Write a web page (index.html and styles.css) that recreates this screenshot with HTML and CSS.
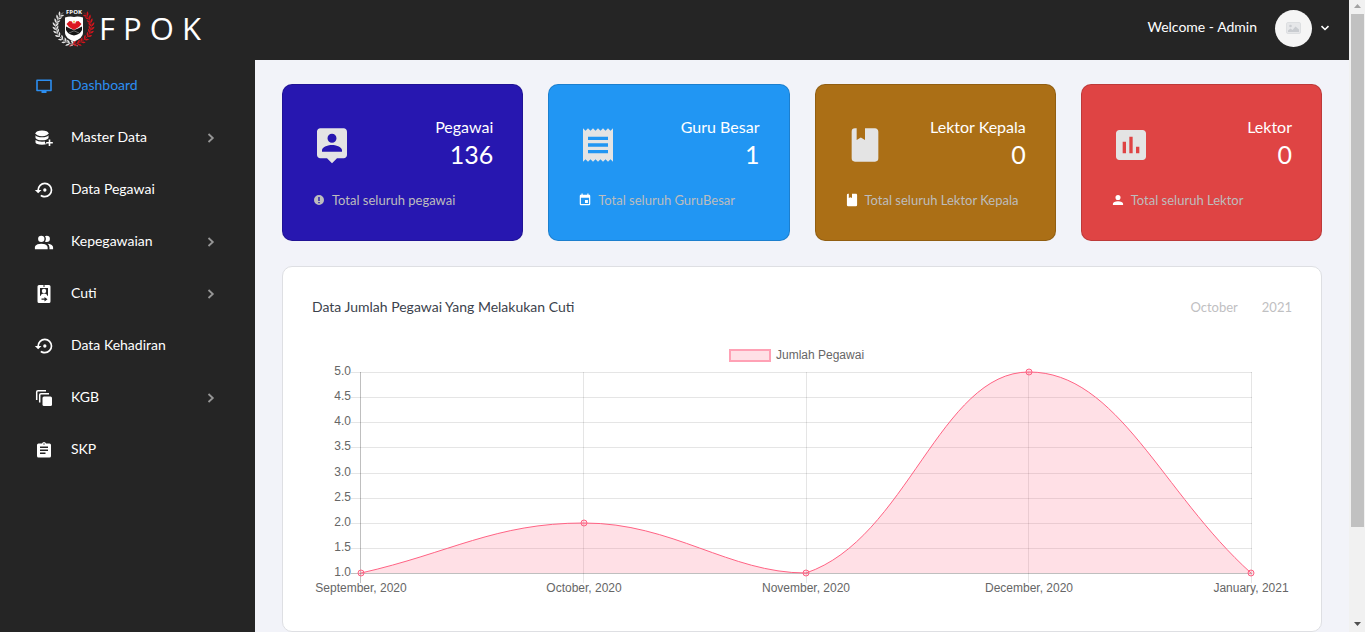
FILE: index.html
```html
<!DOCTYPE html>
<html lang="id">
<head>
<meta charset="utf-8">
<title>FPOK - Dashboard</title>
<meta name="viewport" content="width=device-width, initial-scale=1">
<link rel="stylesheet" href="styles.css">
</head>
<body>
<div class="window">
  <div class="app">
    <header class="topbar">
      <a class="brand" href="#">
        <svg class="brand-mark" viewBox="0 0 44 38" aria-hidden="true">
          <defs>
            <marker id="leafWhite" viewBox="-4 -4 8 8" markerWidth="8" markerHeight="8" markerUnits="userSpaceOnUse" orient="auto">
              <path d="M-1 0Q0 -3 3 -3Q2.500 -0.500 -1 0ZM-1 0Q0 3 3 3Q2.500 0.500 -1 0Z" fill="#e4e4e4"/>
            </marker>
            <marker id="leafRed" viewBox="-4 -4 8 8" markerWidth="8" markerHeight="8" markerUnits="userSpaceOnUse" orient="auto">
              <path d="M-1 0Q0 -3 3 -3Q2.500 -0.500 -1 0ZM-1 0Q0 3 3 3Q2.500 0.500 -1 0Z" fill="#d5141b"/>
            </marker>
          </defs>
          <path d="M26 37L21 35L17 34.500L13.500 32.500L10 30L7 27L5 23.500L4 20L3.500 16.500L4.500 13L6 9.500L8 6.500L11 3.500" fill="none" stroke="#e4e4e4" stroke-width=".6" marker-mid="url(#leafWhite)"/>
          <path d="M17 37L22 35L26 34.500L29.500 32.500L33 30L36 27L38 23.500L39 20L39.500 16.500L38.500 13L37 9.500L35 6.500L32 3.500" fill="none" stroke="#d5141b" stroke-width=".6" marker-mid="url(#leafRed)"/>
          <text x="22" y="5" class="brand-tiny">FPOK</text>
          <path d="M13 8.500Q18 7 22 8Q26 7 31 8.500V24Q31 29 22 32.500Q13 29 13 24Z" fill="#fff"/>
          <path d="M14.500 15L17.500 12L20 12.500L21 15L22 13.500L23 15L24 12.500L26.500 12L29.500 15L27 18L22 21L17 18Z" fill="#dc1820"/>
          <path d="M21 12.500L22 11.500L23 12.500L22 14Z" fill="#e3b52b"/>
          <path d="M14 17.500L18 19.500L22 21L26 19.500L30 17.500V21Q28 25.500 22 26.500Q16 25.500 14 21Z" fill="#161616"/>
          <path d="M17 24L22 21.800L27 24" fill="none" stroke="#aaa" stroke-width=".6"/>
        </svg>
        <span class="brand-name">F P O K</span>
      </a>
      <button class="account" type="button">
        <span class="label">Welcome - Admin</span>
        <span class="avatar">
          <svg viewBox="0 0 16 12" aria-hidden="true">
            <rect x=".5" y=".5" width="14" height="11" rx="1.500" fill="#e6e7e9" stroke="#dddfe1"/>
            <circle cx="4.500" cy="4" r="1.300" fill="#c9ccd0"/>
            <path d="M2 10V8.500L4.500 6.500L6.500 8L9.500 4.500L13 7.500V10Z" fill="#c9ccd0"/>
          </svg>
        </span>
        <svg class="caret" viewBox="0 0 10 6" aria-hidden="true"><path d="M1.500 1.200L5 4.500L8.500 1.200"/></svg>
      </button>
    </header>

    <nav class="sidebar" aria-label="Menu">
      <a class="nav-item active" href="#">
        <svg class="nav-icon" viewBox="0 0 20 20" aria-hidden="true"><path d="M3 4.300H17V14.500H3Z" fill="none" stroke="currentColor" stroke-width="1.600" stroke-linejoin="round"/><path d="M7.500 15H12.500V17H7.500Z"/></svg>
        <span class="label">Dashboard</span>
      </a>
      <button class="nav-item" type="button">
        <svg class="nav-icon" viewBox="0 0 20 20" aria-hidden="true"><ellipse cx="8" cy="5.300" rx="6.500" ry="2.900"/><path d="M1.500 7.300Q3 9.300 8 9.300T14.500 7.300V10Q13 12.300 8 12.300T1.500 10ZM1.500 12Q4 13.800 8 13.800L11 13.500V15.500H13V16Q11 16.800 8 16.800Q2 16.600 1.500 14.500Z"/><path d="M14.700 11.500H16.300V14H18.800V15.600H16.300V18H14.700V15.600H12.200V14H14.700Z"/></svg>
        <span class="label">Master Data</span>
        <svg class="nav-arrow" viewBox="0 0 8 10" aria-hidden="true"><path d="M1.500 1L5.800 5L1.500 9"/></svg>
      </button>
      <a class="nav-item" href="#">
        <svg class="nav-icon" viewBox="-1 0 24 24" aria-hidden="true"><path d="M12,3A9,9 0 0,0 3,12H0L4,16L8,12H5A7,7 0 1,1 12,19C10.500,19 9.090,18.500 7.940,17.700L6.500,19.140C8.040,20.300 9.940,21 12,21A9,9 0 0,0 12,3M14,12A2,2 0 1,0 12,14A2,2 0 0,0 14,12Z"/></svg>
        <span class="label">Data Pegawai</span>
      </a>
      <button class="nav-item" type="button">
        <svg class="nav-icon" viewBox="1 0 22 22" aria-hidden="true"><path d="M16 17V19H2V17S2 13 9 13 16 17 16 17M12.500 7.500A3.500 3.500 0 1 0 9 11A3.500 3.500 0 0 0 12.500 7.500M15.940 13A5.320 5.320 0 0 1 18 17V19H22V17S22 13.370 15.940 13M15 4A3.390 3.390 0 0 0 13.070 4.590A5 5 0 0 1 13.070 10.410A3.390 3.390 0 0 0 15 11A3.500 3.500 0 0 0 15 4Z"/></svg>
        <span class="label">Kepegawaian</span>
        <svg class="nav-arrow" viewBox="0 0 8 10" aria-hidden="true"><path d="M1.500 1L5.800 5L1.500 9"/></svg>
      </button>
      <button class="nav-item" type="button">
        <svg class="nav-icon" viewBox="0 0 20 20" aria-hidden="true"><path fill-rule="evenodd" d="M5 1H15Q16.500 1 16.500 2.500V17.500Q16.500 19 15 19H5Q3.500 19 3.500 17.500V2.500Q3.500 1 5 1ZM6 4V12H14V4ZM9 1.500V2.500H11V1.500Z"/><circle cx="10" cy="7" r="2.200"/><path d="M6.500 12Q7 9.500 10 9.500T13.500 12Z"/><path d="M7.500 14.600H10.500V13L13.500 15.200L10.500 17.400V15.800H7.500Z" fill="#252525"/></svg>
        <span class="label">Cuti</span>
        <svg class="nav-arrow" viewBox="0 0 8 10" aria-hidden="true"><path d="M1.500 1L5.800 5L1.500 9"/></svg>
      </button>
      <a class="nav-item" href="#">
        <svg class="nav-icon" viewBox="-1 0 24 24" aria-hidden="true"><path d="M12,3A9,9 0 0,0 3,12H0L4,16L8,12H5A7,7 0 1,1 12,19C10.500,19 9.090,18.500 7.940,17.700L6.500,19.140C8.040,20.300 9.940,21 12,21A9,9 0 0,0 12,3M14,12A2,2 0 1,0 12,14A2,2 0 0,0 14,12Z"/></svg>
        <span class="label">Data Kehadiran</span>
      </a>
      <button class="nav-item" type="button">
        <svg class="nav-icon" viewBox="0 0 20 20" aria-hidden="true"><path d="M2.700 12V4Q2.700 2.700 4 2.700H12M5.700 14.500V7Q5.700 5.700 7 5.700H15" fill="none" stroke="currentColor" stroke-width="1.500"/><rect x="8.500" y="8.500" width="9.500" height="9.500" rx="1.500"/></svg>
        <span class="label">KGB</span>
        <svg class="nav-arrow" viewBox="0 0 8 10" aria-hidden="true"><path d="M1.500 1L5.800 5L1.500 9"/></svg>
      </button>
      <a class="nav-item" href="#">
        <svg class="nav-icon" viewBox="0 0 20 20" aria-hidden="true"><path fill-rule="evenodd" d="M4.500 3.500H8Q8.500 2 10 2T12 3.500H15.500Q17 3.500 17 5V16Q17 17.500 15.500 17.500H4.500Q3 17.500 3 16V5Q3 3.500 4.500 3.500ZM9.300 3.500V4.500H10.700V3.500ZM6 6.500V8H14V6.500ZM6 9.500V11H14V9.500ZM6 12.500V14H11.500V12.500Z"/></svg>
        <span class="label">SKP</span>
      </a>
    </nav>

    <main class="content">
      <section class="stats" aria-label="Ringkasan">
        <article class="stat stat-indigo">
          <div class="stat-main">
            <svg class="stat-icon" viewBox="0 0 24 24" aria-hidden="true"><path d="M19 2H5c-1.110 0-2 .9-2 2v14c0 1.100.89 2 2 2h4l3 3 3-3h4c1.100 0 2-.9 2-2V4c0-1.100-.9-2-2-2zm-7 3.300c1.490 0 2.700 1.210 2.700 2.700 0 1.490-1.210 2.700-2.700 2.700S9.300 9.490 9.300 8c0-1.490 1.210-2.700 2.700-2.700zM18 16H6v-.9c0-2 4-3.100 6-3.100s6 1.100 6 3.100v.9z"/></svg>
            <div class="stat-figure"><h2>Pegawai</h2><strong>136</strong></div>
          </div>
          <p><svg class="note-icon muted" viewBox="0 0 14 14" aria-hidden="true"><path fill-rule="evenodd" d="M7 2A5 5 0 1 1 7 12A5 5 0 0 1 7 2ZM6.300 4V8H7.700V4ZM6.300 9V10.300H7.700V9Z"/></svg>Total seluruh pegawai</p>
        </article>
        <article class="stat stat-blue">
          <div class="stat-main">
            <svg class="stat-icon" viewBox="0 0 24 24" aria-hidden="true"><path d="M18 17H6v-2h12v2zm0-4H6v-2h12v2zm0-4H6V7h12v2zM3 22l1.500-1.500L6 22l1.500-1.500L9 22l1.500-1.500L12 22l1.500-1.500L15 22l1.500-1.500L18 22l1.500-1.500L21 22V2l-1.500 1.500L18 2l-1.500 1.500L15 2l-1.500 1.500L12 2l-1.500 1.500L9 2 7.500 3.500 6 2 4.500 3.500 3 2v20z"/></svg>
            <div class="stat-figure"><h2>Guru Besar</h2><strong>1</strong></div>
          </div>
          <p><svg class="note-icon" viewBox="0 0 24 24" aria-hidden="true"><path d="M19,19H5V8H19M16,1V3H8V1H6V3H5C3.890,3 3,3.890 3,5V19A2,2 0 0,0 5,21H19A2,2 0 0,0 21,19V5C21,3.890 20.100,3 19,3H18V1M17,12H12V17H17V12Z"/></svg>Total seluruh GuruBesar</p>
        </article>
        <article class="stat stat-amber">
          <div class="stat-main">
            <svg class="stat-icon" viewBox="0 0 24 24" aria-hidden="true"><path d="M18,22A2,2 0 0,0 20,20V4C20,2.890 19.100,2 18,2H12V9L9.500,7.500L7,9V2H6A2,2 0 0,0 4,4V20A2,2 0 0,0 6,22H18Z"/></svg>
            <div class="stat-figure"><h2>Lektor Kepala</h2><strong>0</strong></div>
          </div>
          <p><svg class="note-icon" viewBox="1 1 22 22" aria-hidden="true"><path d="M18,22A2,2 0 0,0 20,20V4C20,2.890 19.100,2 18,2H12V9L9.500,7.500L7,9V2H6A2,2 0 0,0 4,4V20A2,2 0 0,0 6,22H18Z"/></svg>Total seluruh Lektor Kepala</p>
        </article>
        <article class="stat stat-red">
          <div class="stat-main">
            <svg class="stat-icon" viewBox="0 0 24 24" aria-hidden="true"><path d="M19 3H5c-1.100 0-2 .9-2 2v14c0 1.100.9 2 2 2h14c1.100 0 2-.9 2-2V5c0-1.100-.9-2-2-2zM9 17H7v-7h2v7zm4 0h-2V7h2v10zm4 0h-2v-4h2v4z"/></svg>
            <div class="stat-figure"><h2>Lektor</h2><strong>0</strong></div>
          </div>
          <p><svg class="note-icon" viewBox="1 1 22 22" aria-hidden="true"><path d="M12,4A4,4 0 1,1 12,12A4,4 0 0,1 12,4M12,14C16.420,14 20,15.790 20,18V20H4V18C4,15.790 7.580,14 12,14Z"/></svg>Total seluruh Lektor</p>
        </article>
      </section>

      <section class="panel">
        <header class="panel-head">
          <h2>Data Jumlah Pegawai Yang Melakukan Cuti</h2>
          <div class="period"><span>October</span><span>2021</span></div>
        </header>
        <svg class="chart" viewBox="0 0 980 260" role="img" aria-label="Jumlah Pegawai">
          <rect x="418" y="8" width="40" height="11" fill="#ffe0e6" stroke="#ffa1b5" stroke-width="2"/>
          <text x="464" y="17">Jumlah Pegawai</text>
          <path class="grid" d="M39 30.500H940M39 55.500H940M39 80.500H940M39 105.500H940M39 131.500H940M39 156.500H940M39 181.500H940M39 206.500H940M271.500 30V241M494.500 30V241M716.500 30V241M939.500 30V241"/>
          <path class="axis" d="M48.500 30V241M39 231.500H940"/>
          <g class="ticks-y">
            <text x="39" y="33">5.0</text><text x="39" y="58">4.5</text><text x="39" y="83">4.0</text>
            <text x="39" y="108">3.5</text><text x="39" y="134">3.0</text><text x="39" y="159">2.5</text>
            <text x="39" y="184">2.0</text><text x="39" y="209">1.5</text><text x="39" y="234">1.0</text>
          </g>
          <g class="ticks-x">
            <text x="49" y="250">September, 2020</text><text x="272" y="250">October, 2020</text>
            <text x="494" y="250">November, 2020</text><text x="717" y="250">December, 2020</text>
            <text x="939" y="250">January, 2021</text>
          </g>
          <path class="area" d="M49 231C138 211 183 181 272 181S417 231 494 231C595 197 628 30 717 30S850 151 939 231Z"/>
          <path class="line" d="M49 231C138 211 183 181 272 181S417 231 494 231C595 197 628 30 717 30S850 151 939 231"/>
          <g class="points">
            <circle cx="49" cy="231" r="3"/><circle cx="272" cy="181" r="3"/><circle cx="494" cy="231" r="3"/><circle cx="717" cy="30" r="3"/><circle cx="939" cy="231" r="3"/>
          </g>
        </svg>
      </section>
    </main>
  </div>

  <div class="scrollbar" aria-hidden="true">
    <svg viewBox="0 0 16 14"><path d="M5 8L8.500 4L12 8Z" fill="#a3a3a3"/></svg>
    <div class="scroll-track"><div class="scroll-thumb"></div></div>
    <svg viewBox="0 0 16 14"><path d="M5 4L8.500 8L12 4Z" fill="#505050"/></svg>
  </div>
</div>
</body>
</html>
```

FILE: styles.css
```css
*, *::before, *::after { box-sizing: border-box; }

body {
  margin: 0;
  font: 14px/20px Lato, "Liberation Sans", sans-serif;
  color: #3b424c;
  background: #f2f3f9;
}

h2, p { margin: 0; font-weight: 400; }
button { font: inherit; border: 0; background: none; padding: 0; cursor: pointer; }
a { text-decoration: none; }

.window {
  display: grid;
  grid-template: minmax(0, 1fr) / minmax(0, 1fr) 16px;
  height: 100vh;
  overflow: hidden;
}

.app {
  display: grid;
  grid-template: 60px minmax(0, 1fr) / 255px minmax(0, 1fr);
}

.label { padding-bottom: 2px; }

/* Top bar */
.topbar {
  grid-column: 1 / -1;
  display: flex;
  align-items: center;
  justify-content: space-between;
  padding: 0 19px 4px 52px;
  background: #252525;
  color: #fff;
}
.brand { display: flex; align-items: center; gap: 3px; color: #fff; }
.brand-mark { width: 44px; height: 38px; }
.brand-tiny { font: 700 6px "Open Sans", sans-serif; fill: #fff; text-anchor: middle; }
.brand-name { font: 400 31px/40px "Open Sans", sans-serif; }
.account { display: flex; align-items: center; color: #fff; }
.avatar {
  display: grid;
  place-items: center;
  width: 37px;
  height: 37px;
  margin: 0 8px 0 18px;
  border-radius: 50%;
  background: #f5f5f5;
}
.avatar svg { width: 16px; height: 12px; }
.caret { width: 10px; height: 6px; fill: none; stroke: #fff; stroke-width: 1.6; }

/* Sidebar */
.sidebar { background: #252525; }
.nav-item {
  display: flex;
  align-items: center;
  gap: 17px;
  width: 100%;
  height: 52px;
  padding: 0 40px 0 34px;
  color: #fff;
  text-align: left;
}
.nav-item.active { color: #2c8ef0; }
.nav-icon { width: 20px; height: 20px; fill: currentColor; }
.nav-arrow { width: 8px; height: 10px; margin-left: auto; fill: none; stroke: #969696; stroke-width: 1.8; }

/* Content */
.content { padding: 24px 27px; overflow: hidden; }
.stats { display: grid; grid-template-columns: repeat(4, minmax(0, 1fr)); gap: 25px; margin-bottom: 25px; }
.stat {
  padding: 33px 29px 30px;
  border: 1px solid rgba(0, 0, 0, .15);
  border-radius: 10px;
  color: #fff;
}
.stat-indigo { background-color: #2717b0; }
.stat-blue { background-color: #2196f3; }
.stat-amber { background-color: #ab6f16; }
.stat-red { background-color: #df4444; }
.stat-main { display: flex; align-items: center; justify-content: space-between; margin-bottom: 18px; }
.stat-icon { width: 40px; height: 40px; fill: #e4e4e4; }
.stat-figure { text-align: right; }
.stat-figure h2 { font-size: 16px; line-height: 18px; }
.stat-figure strong { display: block; font-size: 25px; line-height: 36px; font-weight: 400; }
.stat p { display: flex; align-items: center; gap: 6px; color: #bdbdbd; font-size: 13px; line-height: 20px; white-space: nowrap; }
.note-icon { width: 14px; height: 14px; fill: #fff; }
.note-icon.muted { fill: #bdbdbd; }

.panel {
  padding: 30px 29px 29px;
  border: 1px solid #dedfe3;
  border-radius: 10px;
  background: #fff;
}
.panel-head { display: flex; align-items: center; justify-content: space-between; margin-bottom: 25px; }
.panel-head h2 { font-size: 14px; line-height: 20px; }
.period { display: flex; gap: 24px; color: #bfc0c2; font-size: 13px; }

/* Chart */
.chart { display: block; width: 100%; height: auto; font: 12px "Liberation Sans", Arial, sans-serif; fill: #666; }
.grid { stroke: rgba(0, 0, 0, .1); fill: none; }
.axis { stroke: rgba(0, 0, 0, .25); fill: none; }
.ticks-y { text-anchor: end; }
.ticks-x { text-anchor: middle; }
.area { fill: rgba(255, 99, 132, .2); }
.line { fill: none; stroke: #ff6384; }
.points { fill: rgba(255, 99, 132, .2); stroke: #ff6384; }

/* Scrollbar */
.scrollbar { display: flex; flex-direction: column; background: #f1f1f1; }
.scrollbar svg { display: block; height: 14px; }
.scroll-track { flex: 1; padding: 0 1px 0 2px; }
.scroll-thumb { height: 85%; background: #c1c1c1; }
```
